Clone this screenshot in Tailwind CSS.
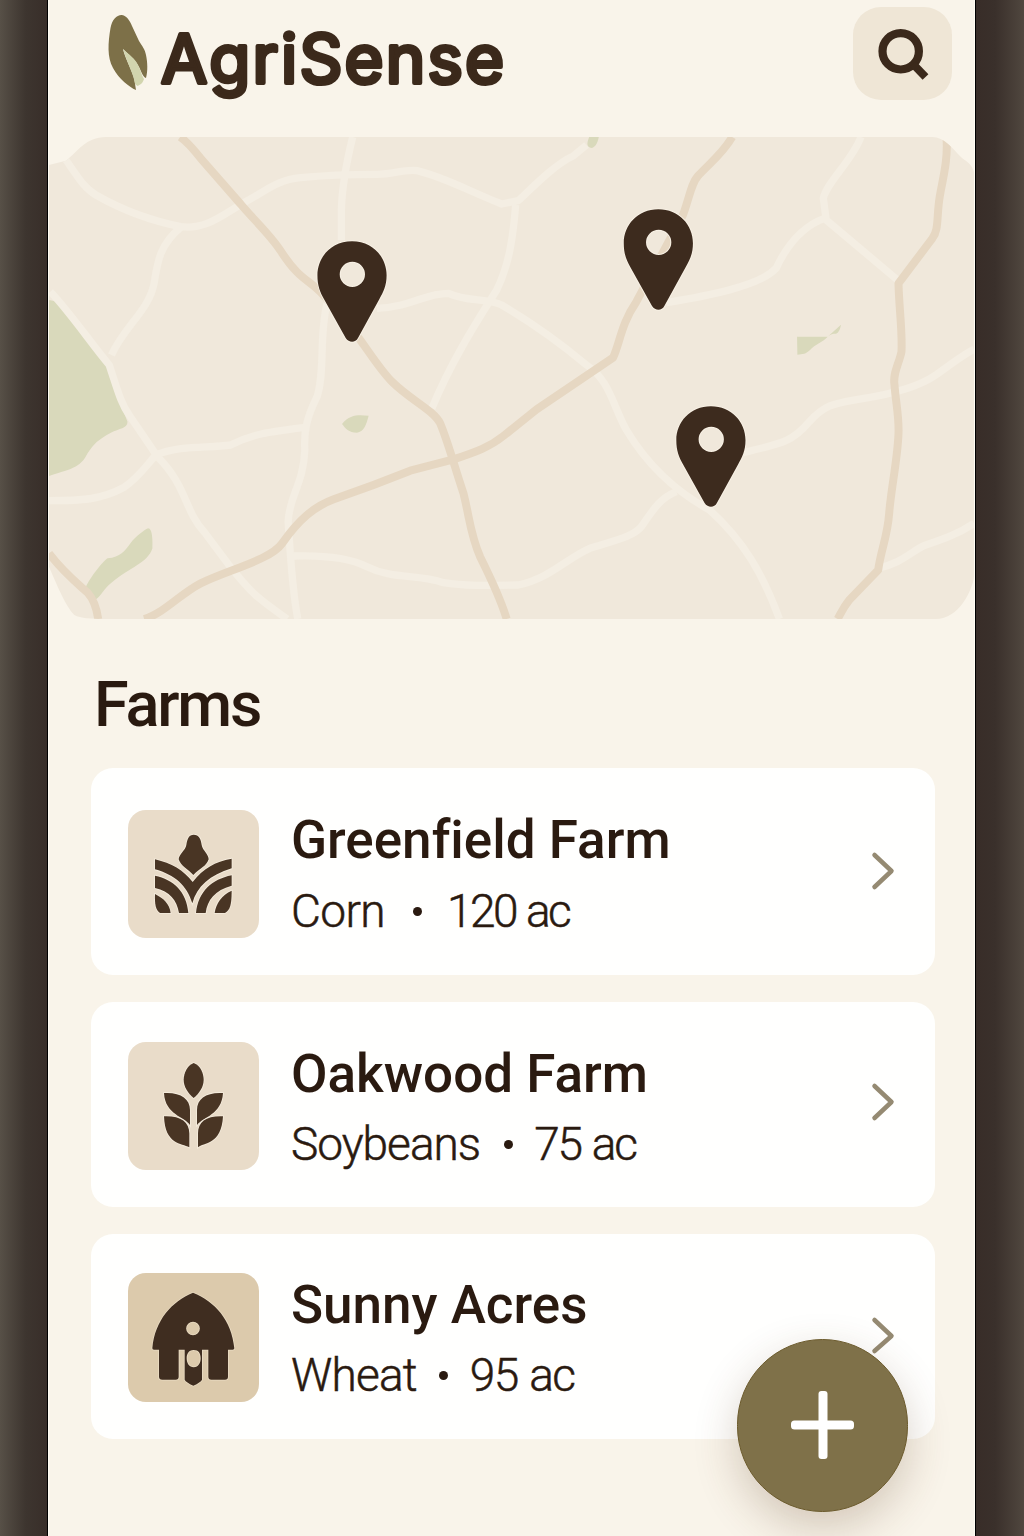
<!DOCTYPE html>
<html lang="en">
<head>
<meta charset="utf-8">
<title>AgriSense</title>
<script src="https://cdn.jsdelivr.net/npm/@tailwindcss/browser@4"></script>
</head>
<body class="flex h-[1536px] w-[1024px] overflow-hidden bg-[#f9f4ea] font-['Roboto',sans-serif] text-[#2a1a10] [font-variant-ligatures:none]">

<div class="w-[48px] shrink-0 border-r border-black bg-linear-to-r from-[#575047] via-[#3d352f] via-55% to-[#382e29]"></div>

<main class="relative flex w-[927px] shrink-0 flex-col border-x border-[#fffcf3] bg-[#f9f4ea]">
  <header class="flex h-[137px] shrink-0 items-start justify-between pr-[22px] pl-[56px]">
    <svg class="h-[120px] w-[420px]" viewBox="105 0 420 120" aria-label="AgriSense">
      <path fill="#7d7048" d="M121.500 15C126 15 129.500 20 132 26L139 41C142 46 145 49 146 55C147.500 62 148 71 146 78C143 77 141 71 139 67C135 59 129 55 123 49C125 58 130 66 133 75C135 80 135 85 136 90C129 87 119 79 113 68C107 57 108 43 110.500 28C112 20 116.500 15 121.500 15Z"/>
      <path fill="#d2d5ae" d="M123 49C129 55 135 58 138 65C141 71 142 76 144 79C143 82 142 84 137.500 86L135 84C134 75 128 65 123 49Z"/>
      <text x="161" y="83" textLength="343" font-family="Inter" font-weight="400" font-size="67" fill="#3b291b" stroke="#3b291b" stroke-width="4.200" stroke-linejoin="round">AgriSense</text>
    </svg>
    <button class="mt-[7px] flex h-[93px] w-[99px] items-center justify-center rounded-[28px] bg-[#efe6d6]" aria-label="Search">
      <svg class="h-[93px] w-[99px]" viewBox="853 7 99 93" fill="none" stroke="#3b291b"><circle cx="900.700" cy="51.300" r="18.200" stroke-width="8.200"/><path d="M913 64L925.500 77" stroke-width="8"/></svg>
    </button>
  </header>

  <section class="h-[482px] shrink-0">
    <svg class="h-full w-full" viewBox="24 21 2781 1446" preserveAspectRatio="none" fill="none">
      <defs>
        <clipPath id="land"><path d="M24 105L75 92C110 65 135 21 195 21H2680C2715 21 2740 55 2765 80C2780 95 2795 95 2805 125V1340C2800 1380 2760 1467 2690 1467H190C150 1467 120 1465 100 1455C75 1430 50 1370 24 1310Z"/></clipPath>
        <path id="pin" fill-rule="evenodd" d="M0-102C62-102 104-55 104 0C104 32 94 50 82 72L18 188C10 203-9 203-19 188L-84 72C-96 50-104 32-104 0C-104-55-62-102 0-102ZM1-41A38 38 0 1 0 1 35A38 38 0 1 0 1-41Z"/>
      </defs>
      <g clip-path="url(#land)">
        <rect x="24" y="21" width="2781" height="1446" fill="#f0e8db"/>
        <g fill="#d9d9bb">
          <path d="M24 510L50 515L205 710C220 770 235 810 260 875C260 895 235 895 210 908C170 930 160 940 140 970C120 1010 100 1015 24 1038Z"/>
          <path d="M322 1195C335 1195 336 1230 335 1255C320 1300 270 1310 210 1360C190 1375 180 1400 165 1408C145 1400 135 1380 135 1370C150 1340 185 1295 200 1285C240 1280 250 1265 270 1238C285 1220 310 1200 322 1195Z"/>
          <path d="M905 882C930 850 960 855 985 857C978 885 970 905 950 908C925 908 915 895 905 882Z"/>
          <path d="M1648 21H1677C1672 45 1664 52 1655 54C1640 50 1640 42 1648 21Z"/>
          <path d="M2273 620H2365C2350 638 2325 643 2312 660C2300 672 2290 673 2274 674ZM2365 620L2405 584C2402 602 2395 614 2383 611C2375 612 2370 616 2365 620Z"/>
        </g>
        <g stroke="#f4eee3" stroke-width="22" stroke-linejoin="round">
          <path d="M75 90C110 140 130 175 165 195C230 232 320 270 420 290C500 300 550 250 620 212C680 180 710 150 780 143C860 135 940 133 1010 133C1060 133 1090 117 1130 122C1210 140 1290 185 1385 222L1435 212C1490 160 1550 100 1600 78L1640 45"/>
          <path d="M937 21C915 110 905 170 903 240V330"/>
          <path d="M420 292C355 345 350 400 340 460C325 540 250 590 212 675"/>
          <path d="M28 485C90 550 150 640 205 705C230 780 240 820 265 855L350 980C440 1070 430 1140 490 1205L565 1305C640 1400 660 1410 740 1467"/>
          <path d="M24 1112C120 1112 180 1110 250 1072C295 1040 310 1015 345 975C420 945 500 955 570 945C640 910 690 905 795 892"/>
          <path d="M860 520C835 620 855 720 830 800C800 860 790 900 793 960C790 1060 745 1100 743 1175C750 1280 755 1380 772 1467"/>
          <path d="M1427 225C1420 310 1410 400 1370 480C1320 560 1240 680 1175 835"/>
          <path d="M1010 535C1120 530 1150 490 1225 490C1280 515 1340 505 1385 525C1470 575 1550 630 1640 705C1710 750 1720 830 1760 900C1820 1000 1900 1080 2010 1140C2110 1230 2170 1330 2220 1467"/>
          <path d="M760 1278C860 1275 930 1285 980 1310C1060 1350 1130 1330 1210 1358C1270 1368 1340 1367 1435 1365C1530 1345 1580 1285 1650 1255C1730 1230 1780 1220 1805 1190C1840 1140 1860 1105 1910 1085"/>
          <path d="M1880 518C1990 500 2160 470 2210 415C2250 330 2300 285 2355 265L2575 450"/>
          <path d="M2465 21C2440 90 2360 160 2352 205L2360 265"/>
          <path d="M2110 968C2230 940 2260 935 2310 875C2360 820 2390 820 2470 806C2570 790 2640 770 2690 735C2740 700 2770 675 2805 658"/>
          <path d="M2515 1315C2590 1300 2620 1260 2660 1245C2720 1225 2760 1210 2805 1180"/>
        </g>
        <g stroke="#e6d7c2" stroke-width="24" stroke-linejoin="round">
          <path d="M418 21C440 35 460 60 480 85L600 222C640 270 690 315 720 362C790 470 810 440 870 520C950 600 1000 700 1055 755C1110 810 1180 840 1200 880C1225 940 1240 1000 1270 1090C1290 1170 1290 1210 1320 1280C1350 1340 1380 1400 1400 1467"/>
          <path d="M310 1467C370 1450 420 1390 480 1360C560 1320 690 1290 725 1240C775 1170 820 1130 880 1108C960 1080 1040 1050 1110 1022L1240 988C1310 965 1350 950 1390 918L1490 838L1720 683C1740 640 1745 580 1790 515L1930 255C1950 200 1955 160 1975 138C2010 100 2050 70 2078 21"/>
          <path d="M2722 21C2728 90 2710 150 2702 200C2692 260 2700 300 2680 325L2578 460C2580 540 2590 600 2587 665C2580 700 2560 730 2566 765C2570 820 2580 860 2578 910C2575 990 2555 1080 2550 1150C2545 1220 2525 1260 2517 1320L2430 1410C2410 1435 2405 1450 2395 1467"/>
          <path d="M24 1270C70 1330 110 1360 140 1388C160 1410 168 1440 172 1467"/>
        </g>
        <g fill="#3d2b1e" stroke="#f8f1e5" stroke-width="6" paint-order="stroke">
          <use href="#pin" x="935" y="436"/><use href="#pin" x="1856" y="340"/><use href="#pin" x="2014" y="931"/>
        </g>
      </g>
    </svg>
  </section>

  <section class="flex flex-col pr-[39px] pl-[42px]">
    <h1 class="mt-[50px] h-[71px] pl-[3px] text-[63px] leading-[71px] font-medium tracking-[-2.2px]">Farms</h1>

    <div class="mt-[28px] flex flex-col gap-[27px]">
      <article class="flex h-[207px] items-start rounded-[22px] bg-[#fffffe] pt-[42px] pr-[40px] pl-[37px]">
        <div class="h-[128px] w-[131px] shrink-0 rounded-[18px] bg-[#e9dcc9]">
          <svg class="h-full w-full" viewBox="24 30 393 384" fill="#493524" stroke="#f5ecdd" stroke-width="5" paint-order="stroke">
            <path d="M221 104C237 104 243 118 245 135C248 152 266 162 266 178C260 198 240 205 220 225C205 208 182 198 176 178C177 162 196 152 199 135C202 115 207 104 221 104Z"/>
            <path d="M105 178C155 190 190 210 218 246C250 205 285 185 335 176V205C270 225 230 260 217 310C200 255 165 225 105 208Z"/>
            <path d="M105 227C160 238 200 275 205 339H177C170 300 150 275 105 264Z"/><path d="M335 226C275 238 235 275 228 339H257C262 300 285 270 335 257Z"/>
            <path d="M105 282C130 295 148 310 152 339H120C107 330 104 315 105 282Z"/><path d="M335 272C305 285 288 310 284 339H315C330 330 335 315 335 272Z"/>
          </svg>
        </div>
        <div class="ml-[32px] flex-1">
          <h2 class="h-[60px] text-[53px] leading-[60px] font-medium whitespace-nowrap">Greenfield Farm</h2>
          <p class="mt-[13px] flex h-[56px] items-center text-[46px] leading-[56px] font-light [-webkit-text-stroke:0.5px_#2a1a10]"><span class="tracking-[-0.6px]">Corn</span><i class="mt-[1px] mr-[25px] ml-[28px] size-[9px] rounded-full bg-current"></i><span class="tracking-[-2.6px] [word-spacing:1.5px]">120 ac</span></p>
        </div>
        <svg class="mt-[41px] h-[40px] w-[24px]" viewBox="0 0 24 40" fill="none" stroke="#958a72" stroke-width="4.500" stroke-linecap="round" stroke-linejoin="round"><path d="M3.500 4L20.500 20L3.500 36"/></svg>
      </article>

      <article class="flex h-[205px] items-start rounded-[22px] bg-[#fffffe] pt-[40px] pr-[40px] pl-[37px]">
        <div class="h-[128px] w-[131px] shrink-0 rounded-[18px] bg-[#e9dcc9]">
          <svg class="h-full w-full" viewBox="24 36 393 384" fill="#493524" stroke="#f5ecdd" stroke-width="5" paint-order="stroke">
            <path d="M221 99C242 107 251 130 251 150C251 170 238 190 221 204C204 190 191 170 191 150C191 130 201 107 221 99Z"/>
            <path d="M132 189C180 186 210 205 210 240V285C195 260 135 255 132 189Z"/><path d="M309 189C260 186 231 205 231 240V285C250 260 305 255 309 189Z"/>
            <path d="M132 259C180 257 208 275 208 310V352C185 340 135 345 132 259Z"/><path d="M309 259C260 257 234 275 234 310V352C250 338 305 345 309 259Z"/>
          </svg>
        </div>
        <div class="mt-[2px] ml-[32px] flex-1">
          <h2 class="h-[60px] text-[53px] leading-[60px] font-medium whitespace-nowrap">Oakwood Farm</h2>
          <p class="mt-[12px] flex h-[56px] items-center text-[46px] leading-[56px] font-light [-webkit-text-stroke:0.5px_#2a1a10]"><span class="tracking-[-1px]">Soybeans</span><i class="mt-[1px] mr-[21px] ml-[24px] size-[9px] rounded-full bg-current"></i><span class="tracking-[-2.2px] [word-spacing:2px]">75 ac</span></p>
        </div>
        <svg class="mt-[40px] h-[40px] w-[24px]" viewBox="0 0 24 40" fill="none" stroke="#958a72" stroke-width="4.500" stroke-linecap="round" stroke-linejoin="round"><path d="M3.500 4L20.500 20L3.500 36"/></svg>
      </article>

      <article class="flex h-[205px] items-start rounded-[22px] bg-[#fffffe] pt-[39px] pr-[40px] pl-[37px]">
        <div class="h-[129px] w-[131px] shrink-0 rounded-[18px] bg-[#dccaac]">
          <svg class="h-full w-full" viewBox="24 39 393 387" fill="#3f2d20" stroke="#eadcc3" stroke-width="5" paint-order="stroke">
            <path fill-rule="evenodd" d="M219 98C285 125 335 180 343 265Q343 269 338 269H324V350Q324 359 315 359H274Q265 359 265 350V269H246V359Q242 367 220 377Q198 367 194 359V269H176V350Q176 359 167 359H127Q117 359 117 350V269H102Q96 269 97 264C105 180 155 125 219 98ZM219 185A20 20 0 1 0 219 226A20 20 0 1 0 219 185ZM221 270C205 270 200 283 200 295C200 310 208 322 221 322C236 322 242 308 242 295C242 280 236 270 221 270Z"/>
          </svg>
        </div>
        <div class="mt-[2px] ml-[32px] flex-1">
          <h2 class="h-[60px] text-[53px] leading-[60px] font-medium whitespace-nowrap">Sunny Acres</h2>
          <p class="mt-[12px] flex h-[56px] items-center text-[46px] leading-[56px] font-light [-webkit-text-stroke:0.5px_#2a1a10]"><span class="tracking-[-0.8px]">Wheat</span><i class="mt-[1px] mr-[22px] ml-[22px] size-[9px] rounded-full bg-current"></i><span class="tracking-[-1.6px] [word-spacing:2px]">95 ac</span></p>
        </div>
        <svg class="mt-[42px] h-[40px] w-[24px]" viewBox="0 0 24 40" fill="none" stroke="#958a72" stroke-width="4.500" stroke-linecap="round" stroke-linejoin="round"><path d="M3.500 5L20.500 21L3.500 36"/></svg>
      </article>
    </div>
  </section>

  <button class="absolute top-[1339px] left-[688px] flex h-[173px] w-[171px] items-center justify-center rounded-full border border-[#6b5a2c] bg-[#7f7149] shadow-[0_16px_44px_0_rgba(90,60,30,0.24)]" aria-label="Add farm">
    <svg class="-mt-[2px] h-[70px] w-[66px]" viewBox="0 0 66 70" fill="#fff"><rect x="28.500" y="1" width="9" height="68" rx="3"/><rect x="1" y="30.500" width="63" height="9" rx="3.500"/></svg>
  </button>
</main>

<div class="w-[49px] shrink-0 border-l border-black bg-linear-to-r from-[#382d28] via-[#3a302b] via-40% to-[#50473f]"></div>
</body>
</html>
